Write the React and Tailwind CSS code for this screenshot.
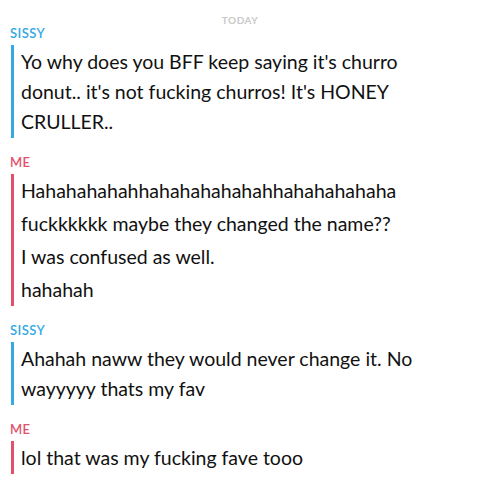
import React from 'react';

const thread = [
  {
    who: 'SISSY',
    lines: ["Yo why does you BFF keep saying it's churro donut.. it's not fucking churros! It's HONEY CRULLER.."],
  },
  {
    who: 'ME',
    lines: [
      'Hahahahahahhahahahahahahhahahahahaha',
      'fuckkkkkk maybe they changed the name??',
      'I was confused as well.',
      'hahahah',
    ],
  },
  {
    who: 'SISSY',
    lines: ['Ahahah naww they would never change it. No wayyyyy thats my fav'],
  },
  {
    who: 'ME',
    lines: ['lol that was my fucking fave tooo'],
  },
];

function Group({ who, lines }) {
  const isMe = who === 'ME';
  return (
    <div className="mb-[17px]">
      <div
        className={`text-[13px] leading-[14px] font-semibold tracking-[0.4px] pl-[10px] mb-[5px] ${
          isMe ? 'text-[#e4506c]' : 'text-[#34a9e2]'
        }`}
      >
        {who}
      </div>
      <div className="pl-[11px] pr-[20px]">
        <div className={`border-l-[3px] pl-[7px] ${isMe ? 'border-[#e4506c]' : 'border-[#34a9e2]'}`}>
          {lines.map((t, i) => (
            <div key={i} className="text-[19.5px] leading-[30px] py-[1.5px] text-[#111]">
              {t}
            </div>
          ))}
        </div>
      </div>
    </div>
  );
}

export default function App() {
  return (
    <div className="w-[480px] h-[480px] overflow-hidden bg-white font-['Lato',sans-serif]">
      <div className="pt-[14px] text-center text-[10px] leading-[12px] font-bold tracking-[0.5px] text-[#c9c9c9]">
        TODAY
      </div>
      {thread.map((g, i) => (
        <Group key={i} who={g.who} lines={g.lines} />
      ))}
    </div>
  );
}
